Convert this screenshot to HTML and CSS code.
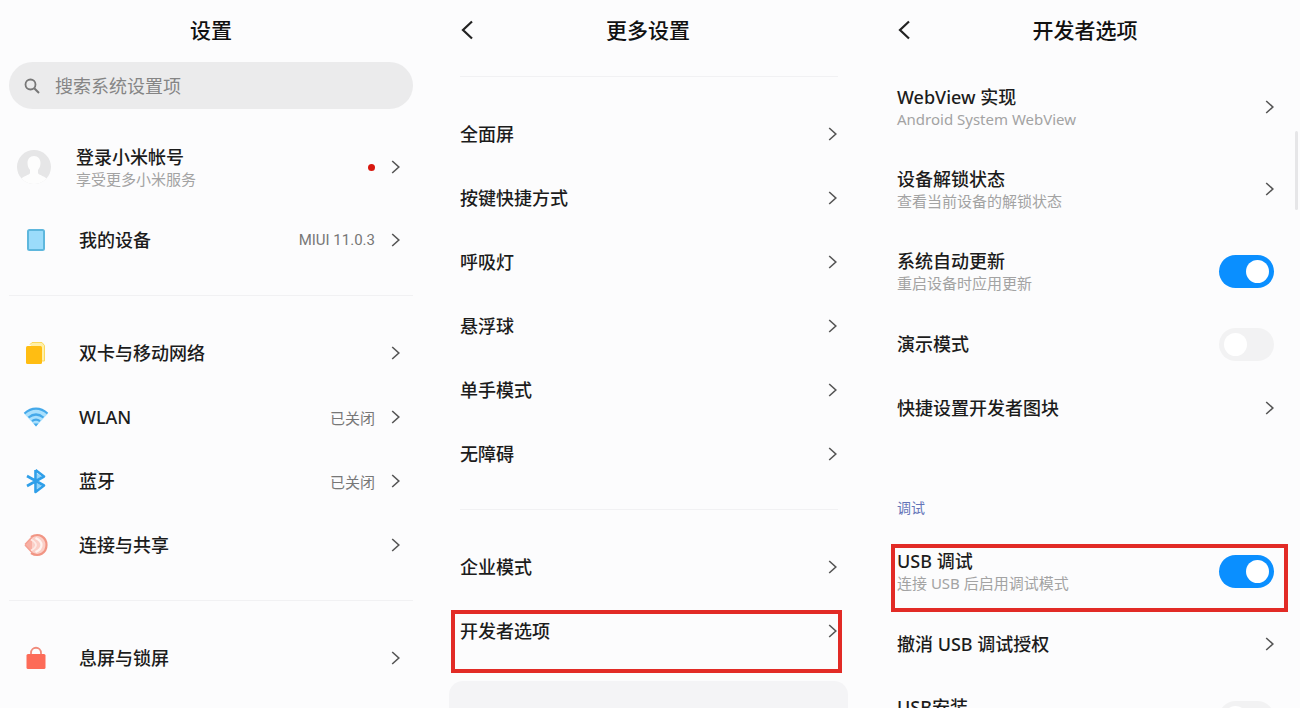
FILE: index.html
```html
<!DOCTYPE html>
<html lang="zh-CN">
<head>
<meta charset="utf-8">
<meta name="viewport" content="width=device-width, initial-scale=1">
<title>设置</title>
<link rel="stylesheet" href="styles.css">
</head>
<body>
<svg class="sprite" aria-hidden="true">
  <symbol id="chevron" viewBox="0 0 9 14"><path d="M1.2 1 7.8 7l-6.600 6" fill="none" stroke="currentColor" stroke-width="1.600"/></symbol>
  <symbol id="back" viewBox="0 0 12 20"><path d="M11 1.500 2 10l9 8.500" fill="none" stroke="currentColor" stroke-width="2.200"/></symbol>
</svg>
<main class="screens">

  <section class="screen">
    <header class="bar"><h1 class="title">设置</h1></header>
    <label class="search">
      <svg class="search-icon" viewBox="0 0 16 16" aria-hidden="true"><circle cx="6.500" cy="6.500" r="5" fill="none" stroke="#777" stroke-width="1.800"/><path d="M10.200 10.200 15 15" stroke="#777" stroke-width="2"/></svg>
      <input class="search-input" type="search" placeholder="搜索系统设置项" aria-label="搜索系统设置项">
    </label>
    <nav class="group group-account">
      <a class="row row-tall row-account" href="#account">
        <span class="slot"><svg width="36" height="36" viewBox="0 0 36 36"><defs><clipPath id="disc"><circle cx="18" cy="18" r="17"/></clipPath></defs><g clip-path="url(#disc)"><path d="M0 0h36v36H0z" fill="#e6e6e7"/><path d="M18 7c4 0 6.500 3 6.500 7 0 3-1 5-2.500 7v3c0 2 8 3 11 8v5H3v-5c3-5 11-6 11-8v-3c-1.500-2-2.500-4-2.500-7 0-4 2.500-7 6.500-7z" fill="#fdfdfd"/></g></svg></span>
        <span class="text"><span class="name">登录小米帐号</span><span class="hint">享受更多小米服务</span></span>
        <span class="dot"></span>
        <svg class="chevron"><use href="#chevron"/></svg>
      </a>
      <a class="row" href="#device">
        <span class="slot"><svg width="20" height="24" viewBox="0 0 20 24"><rect x="2" y="2" width="16" height="20" rx="1.500" fill="#9bdcfb" stroke="#5eb7dd" stroke-width="2"/></svg></span>
        <span class="text"><span class="name">我的设备</span></span>
        <span class="value">MIUI 11.0.3</span>
        <svg class="chevron"><use href="#chevron"/></svg>
      </a>
    </nav>
    <nav class="group group-ruled">
      <a class="row" href="#sim">
        <span class="slot"><svg width="24" height="24" viewBox="0 0 24 24"><path d="M6 3.500 8 1.500h10l2.500 3V20H18" fill="#fff0a8" stroke="#fbd95c" stroke-width="1"/><rect x="2" y="5" width="16" height="18" rx="1.500" fill="#ffbd12"/></svg></span>
        <span class="text"><span class="name">双卡与移动网络</span></span>
        <svg class="chevron"><use href="#chevron"/></svg>
      </a>
      <a class="row" href="#wlan">
        <span class="slot"><svg width="26" height="20" viewBox="0 0 26 20"><path d="M1 6.500C8-.5 18-.5 25 6.500L13 19.500z" fill="#a9e0fd"/><g fill="none" stroke="#45a9ea" stroke-width="2.200"><path d="M1.500 6.500c7-6.500 16-6.500 23 0"/><path d="M5.500 10.500c5-4 10-4 15 0"/><path d="M9 14.200c2.500-2 5.500-2 8 0"/></g><path d="m10.500 16.500 2.500 3 2.500-3z" fill="#45a9ea"/></svg></span>
        <span class="text"><span class="name">WLAN</span></span>
        <span class="value">已关闭</span>
        <svg class="chevron"><use href="#chevron"/></svg>
      </a>
      <a class="row" href="#bluetooth">
        <span class="slot"><svg width="22" height="26" viewBox="0 0 22 26"><path d="m11.500 5 5 3.500-5 3zM11.500 15l5 2.500-5 4z" fill="#8fd3fb"/><path d="M10.500 2v22l8.500-6.500L2 8M2 18l17-9.500L10.500 2" fill="none" stroke="#2f9fe9" stroke-width="2.600" stroke-linejoin="round"/></svg></span>
        <span class="text"><span class="name">蓝牙</span></span>
        <span class="value">已关闭</span>
        <svg class="chevron"><use href="#chevron"/></svg>
      </a>
      <a class="row" href="#share">
        <span class="slot"><svg width="24" height="24" viewBox="0 0 24 24"><path d="M1 11.500 8 4c7-5 14.500 0 14.500 8S15 25 8 20z" fill="#fbcfc7"/><path d="M1 11.500 8 4v15z" fill="#f8b0a4"/><path d="M7 4c8-5 15.500.5 15.500 8S15 25 7 20" fill="none" stroke="#f19584" stroke-width="2.200"/><path d="M1 11.500 8 4M1 12l7 7.500" fill="none" stroke="#f4a092" stroke-width="1.500"/><path d="M7 6.500c3.500 2 5 3.500 5 5.500s-1.500 3.500-5 5.500" fill="none" stroke="#fdeae6" stroke-width="1.800"/><path d="M11.500 5c4.500 2 6 4.500 6 7s-1.500 5-6 7" fill="none" stroke="#fff4f1" stroke-width="2.200"/></svg></span>
        <span class="text"><span class="name">连接与共享</span></span>
        <svg class="chevron"><use href="#chevron"/></svg>
      </a>
    </nav>
    <nav class="group group-ruled">
      <a class="row" href="#lock">
        <span class="slot"><svg width="22" height="24" viewBox="0 0 22 24"><path d="M6 9V7c0-7 10-7 10 0v2" fill="none" stroke="#f08a7a" stroke-width="1.800"/><rect x="1.500" y="8" width="19" height="15" rx="1.500" fill="#fd6b58"/></svg></span>
        <span class="text"><span class="name">息屏与锁屏</span></span>
        <svg class="chevron"><use href="#chevron"/></svg>
      </a>
    </nav>
  </section>

  <section class="screen">
    <header class="bar"><button class="back" type="button" aria-label="返回"><svg width="12" height="20"><use href="#back"/></svg></button><h1 class="title">更多设置</h1></header>
    <nav class="group group-ruled group-inset group-first">
      <a class="row" href="#fullscreen"><span class="text"><span class="name">全面屏</span></span><svg class="chevron"><use href="#chevron"/></svg></a>
      <a class="row" href="#buttons"><span class="text"><span class="name">按键快捷方式</span></span><svg class="chevron"><use href="#chevron"/></svg></a>
      <a class="row" href="#light"><span class="text"><span class="name">呼吸灯</span></span><svg class="chevron"><use href="#chevron"/></svg></a>
      <a class="row" href="#ball"><span class="text"><span class="name">悬浮球</span></span><svg class="chevron"><use href="#chevron"/></svg></a>
      <a class="row" href="#onehand"><span class="text"><span class="name">单手模式</span></span><svg class="chevron"><use href="#chevron"/></svg></a>
      <a class="row" href="#access"><span class="text"><span class="name">无障碍</span></span><svg class="chevron"><use href="#chevron"/></svg></a>
    </nav>
    <nav class="group group-ruled group-inset">
      <a class="row" href="#enterprise"><span class="text"><span class="name">企业模式</span></span><svg class="chevron"><use href="#chevron"/></svg></a>
      <a class="row marked marked-link" href="#developer"><span class="text"><span class="name">开发者选项</span></span><svg class="chevron"><use href="#chevron"/></svg></a>
    </nav>
    <div class="panel"></div>
  </section>

  <section class="screen screen-developer">
    <header class="bar"><button class="back" type="button" aria-label="返回"><svg width="12" height="20"><use href="#back"/></svg></button><h1 class="title">开发者选项</h1></header>
    <div class="group group-options">
      <a class="row row-tall" href="#webview"><span class="text"><span class="name">WebView 实现</span><span class="hint">Android System WebView</span></span><svg class="chevron"><use href="#chevron"/></svg></a>
      <a class="row row-tall" href="#unlock"><span class="text"><span class="name">设备解锁状态</span><span class="hint">查看当前设备的解锁状态</span></span><svg class="chevron"><use href="#chevron"/></svg></a>
      <label class="row row-tall"><span class="text"><span class="name">系统自动更新</span><span class="hint">重启设备时应用更新</span></span><input class="switch" type="checkbox" checked></label>
      <label class="row"><span class="text"><span class="name">演示模式</span></span><input class="switch" type="checkbox"></label>
      <a class="row" href="#tiles"><span class="text"><span class="name">快捷设置开发者图块</span></span><svg class="chevron"><use href="#chevron"/></svg></a>
    </div>
    <h2 class="caption">调试</h2>
    <div class="group">
      <label class="row row-tall marked marked-switch"><span class="text"><span class="name">USB 调试</span><span class="hint">连接 USB 后启用调试模式</span></span><input class="switch" type="checkbox" checked></label>
      <a class="row" href="#revoke"><span class="text"><span class="name">撤消 USB 调试授权</span></span><svg class="chevron"><use href="#chevron"/></svg></a>
      <label class="row row-tall"><span class="text"><span class="name">USB安装</span><span class="hint">允许通过USB安装应用</span></span><input class="switch" type="checkbox"></label>
    </div>
    <div class="scrollbar"></div>
  </section>

</main>
</body>
</html>
```

FILE: styles.css
```css
* {
  box-sizing: border-box;
}

body {
  margin: 0;
  height: 100vh;
  overflow: hidden;
  background: #fcfcfd;
  color: #1c1c1c;
  font-family: "Noto Sans", "Noto Sans CJK SC", sans-serif;
  font-size: 18px;
}

.sprite {
  position: absolute;
  width: 0;
  height: 0;
}

.screens {
  display: grid;
  grid-template-columns: repeat(3, minmax(0, 1fr));
  gap: 33px;
  height: 100%;
  padding: 0 13px 0 9px;
}

.screen {
  display: flex;
  flex-direction: column;
  min-height: 0;
}

.screen > * {
  flex-shrink: 0;
}

.screen-developer {
  position: relative;
}

.bar {
  display: grid;
  grid-template-columns: 40px 1fr 40px;
  align-items: center;
  height: 60px;
}

.title {
  grid-column: 2;
  margin: 0;
  font-size: 21px;
  line-height: 28px;
  font-weight: 500;
  text-align: center;
  color: #111;
}

.back {
  display: flex;
  justify-content: flex-end;
  width: 40px;
  padding: 0 13px 0 0;
  border: 0;
  background: none;
  color: #222;
}

.search {
  display: flex;
  align-items: center;
  gap: 15px;
  height: 47px;
  margin-top: 2px;
  padding: 0 15px;
  border-radius: 24px;
  background: #ebebec;
}

.search-icon {
  width: 16px;
  height: 16px;
}

.search-input {
  flex: 1;
  min-width: 0;
  padding: 0;
  border: 0;
  outline: 0;
  background: none;
  color: #333;
  font: inherit;
}

.search-input::placeholder {
  color: #858585;
  opacity: 1;
}

.group-account {
  padding-top: 17px;
}

.group-ruled {
  margin-top: 23px;
  padding-top: 25px;
  border-top: 1px solid #f1f1f3;
}

.group-inset {
  margin-right: 12px;
  margin-left: 14px;
}

.group-first {
  margin-top: 16px;
}

.group-inset .row {
  margin: 0 -12px 0 -14px;
}

.group-options {
  padding-top: 6px;
}

.row {
  position: relative;
  display: flex;
  align-items: center;
  height: 64px;
  padding: 0 13px 0 14px;
  color: inherit;
  text-decoration: none;
}

.row-tall {
  height: 82px;
}

.slot {
  display: flex;
  justify-content: center;
  flex: none;
  width: 36px;
  margin: 0 25px 0 -5px;
}

.row-account .slot {
  margin: 0 24px 0 -7px;
}

.text {
  display: flex;
  flex: 1;
  flex-direction: column;
  min-width: 0;
}

.name {
  line-height: 24px;
  font-weight: 500;
}

.hint {
  font-size: 15px;
  line-height: 20px;
  color: #a3a3a3;
}

.value {
  margin-right: 16px;
  font-family: Roboto, "Noto Sans CJK SC", sans-serif;
  font-size: 15px;
  color: #777;
}

.dot {
  width: 7px;
  height: 7px;
  margin-right: 16px;
  border-radius: 50%;
  background: #d8180f;
}

.chevron {
  position: relative;
  z-index: 1;
  flex: none;
  width: 9px;
  height: 14px;
  color: #555;
}

.switch {
  appearance: none;
  display: flex;
  align-items: center;
  flex: none;
  width: 55px;
  height: 33px;
  margin: 0;
  padding: 0 5px;
  border-radius: 17px;
  background: #f2f2f3;
}

.switch::before {
  content: "";
  width: 23px;
  height: 23px;
  border-radius: 50%;
  background: #fff;
}

.switch:checked {
  justify-content: flex-end;
  background: #0a8fff;
}

.marked::after {
  content: "";
  position: absolute;
  border: 4px solid #e22b26;
}

.marked-link::after {
  inset: 11px 8px -10px 5px;
}

.marked-switch::after {
  inset: 14px -1px 0 8px;
}

.caption {
  margin: 0;
  padding: 57px 14px 11px;
  font-size: 14px;
  line-height: 22px;
  font-weight: 400;
  color: #6474b8;
}

.panel {
  flex: 1 0 28px;
  margin: 18px 2px 0 3px;
  border-radius: 14px 14px 0 0;
  background: #f4f4f6;
}

.scrollbar {
  position: absolute;
  top: 131px;
  right: -11px;
  width: 3px;
  height: 79px;
  border-radius: 2px;
  background: #e6e6e8;
}
```
